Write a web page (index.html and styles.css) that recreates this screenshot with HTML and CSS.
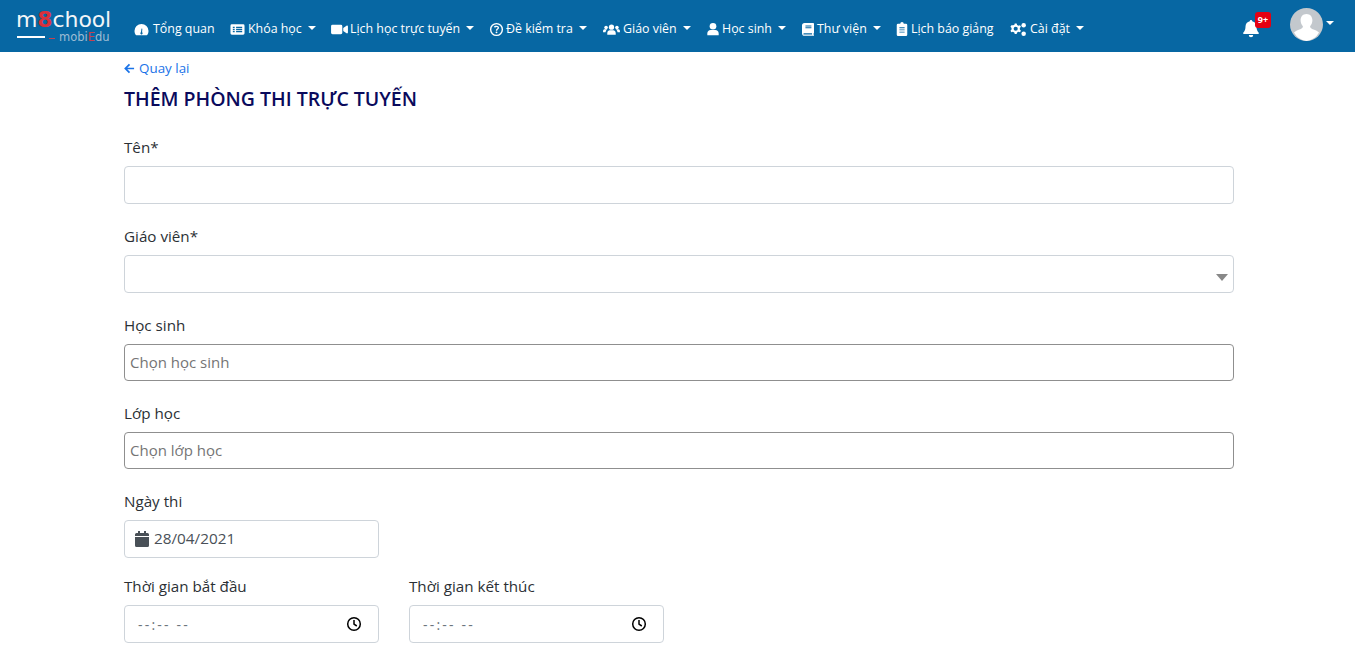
FILE: index.html
```html
<!DOCTYPE html>
<html lang="vi">
<head>
<meta charset="utf-8">
<title>Thêm phòng thi trực tuyến</title>
<link rel="stylesheet" href="styles.css">
</head>
<body>
<header class="navbar">
  <a class="logo" href="#">
    <span class="logo-main">m<span class="logo-red">8</span>chool</span>
    <span class="logo-sub"><span class="logo-line"></span><span class="logo-dash"></span><span class="logo-edu">mobi<span class="logo-edu-red">E</span>du</span></span>
  </a>
  <nav class="menu">
    <a class="item w1" href="#"><svg class="ic" viewBox="0 0 16 16"><path fill-rule="evenodd" d="M8 2a7.500 7.500 0 0 0-7.500 7.500c0 1.500.4 2.800 1.200 4a1 1 0 0 0 .8.500h11a1 1 0 0 0 .8-.5c.8-1.200 1.200-2.500 1.200-4A7.500 7.500 0 0 0 8 2zm.9 5.200L8.600 11a1.200 1.200 0 1 1-1.200 0L8 7z"/></svg>Tổng quan</a>
    <a class="item w2 caret" href="#"><svg class="ic" viewBox="0 0 16 16"><path fill-rule="evenodd" d="M2 2.500h12a1.500 1.500 0 0 1 1.500 1.500v8a1.500 1.500 0 0 1-1.500 1.500H2A1.500 1.500 0 0 1 .5 12V4A1.500 1.500 0 0 1 2 2.500zM3 5v1.500h2V5zm3.500 0v1.500H13V5zM3 7.300v1.400h2V7.300zm3.500 0v1.400H13V7.300zM3 9.500V11h2V9.500zm3.500 0V11H13V9.500z"/></svg>Khóa học</a>
    <a class="item w3 caret" href="#"><svg class="ic ic-wide" viewBox="0 0 18 16"><path d="M1.500 3h9A1.500 1.500 0 0 1 12 4.500v7a1.500 1.500 0 0 1-1.500 1.500h-9A1.500 1.500 0 0 1 0 11.500v-7A1.500 1.500 0 0 1 1.500 3zM13 6.500l3.500-2.500c.6-.4 1.500 0 1.500.8v6.400c0 .8-.9 1.200-1.500.8L13 9.500z"/></svg>Lịch học trực tuyến</a>
    <a class="item w4 caret" href="#"><svg class="ic" viewBox="0 0 16 16"><path fill-rule="evenodd" d="M8 1a7 7 0 1 1 0 14A7 7 0 0 1 8 1zm0 1.500a5.500 5.500 0 1 0 0 11 5.500 5.500 0 0 0 0-11zM8 4c1.500 0 2.700.9 2.700 2.200 0 1.800-2 1.800-2 3H7.300c0-2 2-2 2-3 0-.6-.6-.9-1.300-.9-.7 0-1.200.3-1.600.9l-1-.8C5.100 4.500 6.300 4 8 4zm0 6a1 1 0 1 1 0 2 1 1 0 0 1 0-2z"/></svg>Đề kiểm tra</a>
    <a class="item w5 caret" href="#"><svg class="ic ic-wide" viewBox="0 0 18 16"><circle cx="9" cy="5.500" r="2.800"/><circle cx="3.200" cy="5.800" r="1.900"/><circle cx="14.800" cy="5.800" r="1.900"/><path d="M4.500 13.500v-1.800C4.500 9.800 6 8.800 7 8.800h4c1 0 2.500 1 2.500 2.900v1.800zM0 11V9.500c0-1 .8-1.700 1.800-1.700h2.600c-1 .7-1.600 1.800-1.800 3.200zM18 11V9.500c0-1-.8-1.700-1.800-1.700h-2.600c1 .7 1.600 1.800 1.800 3.200z"/></svg>Giáo viên</a>
    <a class="item w6 caret" href="#"><svg class="ic ic-user" viewBox="0 0 16 16"><circle cx="8" cy="4.800" r="3.800"/><path d="M1.500 15v-1.800c0-2.300 1.700-4 3.800-4h5.400c2.100 0 3.800 1.700 3.800 4V15z"/></svg>Học sinh</a>
    <a class="item w7 caret" href="#"><svg class="ic ic-narrow" viewBox="0 0 14 16"><path fill-rule="evenodd" d="M3 1h10a1 1 0 0 1 1 1v10.500a1 1 0 0 1-.6.9v1.100h.2a.7.7 0 0 1 0 1.500H3a3 3 0 0 1-3-3V4a3 3 0 0 1 3-3zm-.6 12c-.4 0-.9.300-.9.800s.5.700.9.700h9.300V13zM4 4v1h7V4zm0 2v1h7V6z"/></svg>Thư viện</a>
    <a class="item w8" href="#"><svg class="ic ic-narrow" viewBox="0 0 12 16"><path fill-rule="evenodd" d="M4 2a2 2 0 0 1 4 0h2.500A1.500 1.500 0 0 1 12 3.500v11a1.500 1.500 0 0 1-1.500 1.500h-9A1.500 1.500 0 0 1 0 14.500v-11A1.500 1.500 0 0 1 1.500 2zM3 6v1h6V6zm0 2.500v1h6v-1zM3 11v1h6v-1z"/></svg>Lịch báo giảng</a>
    <a class="item caret" href="#"><svg class="ic ic-wide" viewBox="0 0 18 16"><path fill-rule="evenodd" d="M5 3.500l1.500-.4.500-1.600h2l.5 1.600 1.500.8 1.600-.5 1 1.700-1.200 1.200v1.700l1.200 1.200-1 1.700-1.600-.5-1.500.8-.5 1.600H7l-.5-1.600-1.500-.8-1.600.5-1-1.700L3.600 8V6.300L2.400 5.100l1-1.700zM8 5a2.200 2.200 0 1 0 0 4.400A2.200 2.200 0 0 0 8 5z" transform="translate(-2 0)"/><circle cx="14.500" cy="3.500" r="2.400"/><circle cx="14.500" cy="12.500" r="2.400"/></svg>Cài đặt</a>
  </nav>
  <div class="tools">
    <a class="bell" href="#">
      <svg class="bell-ic" viewBox="0 0 16 18"><path d="M8 0a1.200 1.200 0 0 1 1.200 1.300c2.600.5 4.300 2.700 4.300 5.200 0 4.500 2 5.600 2.300 6.300.3.500 0 1.200-.8 1.200H1c-.8 0-1.100-.7-.8-1.200.3-.7 2.300-1.800 2.300-6.300 0-2.500 1.700-4.700 4.300-5.200A1.200 1.200 0 0 1 8 0zM5.800 15h4.400a2.200 2.200 0 0 1-4.400 0z"/></svg>
      <span class="badge">9+</span>
    </a>
    <a class="user" href="#">
      <svg class="avatar" viewBox="0 0 33 33"><circle cx="16.500" cy="16.500" r="16.500" fill="#c3c8cd"/><path d="M16.500 6c3.800 0 5.900 2.900 5.900 6.300 0 2.400-1 4.600-2.300 6 0 1.300.5 2 2 2.600 3 1 5.400 2 6.900 3.600A16.500 16.500 0 0 1 16.500 33 16.500 16.500 0 0 1 4 24.500c1.500-1.600 3.900-2.600 6.900-3.600 1.500-.6 2-1.300 2-2.600-1.300-1.400-2.300-3.600-2.300-6C10.600 8.900 12.700 6 16.500 6z" fill="#fff"/></svg>
      <span class="user-caret"></span>
    </a>
  </div>
</header>
<main class="container">
  <a class="back" href="#"><svg class="back-ic" viewBox="0 0 12 12"><path d="M6 1.500L1.500 6 6 10.500M1.800 6H11" fill="none" stroke="currentColor" stroke-width="1.900"/></svg>Quay lại</a>
  <h1 class="title">THÊM PHÒNG THI TRỰC TUYẾN</h1>
  <form class="form">
    <div class="group g1">
      <label class="label">Tên*</label>
      <div class="control"></div>
    </div>
    <div class="group g1">
      <label class="label">Giáo viên*</label>
      <div class="control select"><span class="select-arrow"></span></div>
    </div>
    <div class="group g2">
      <label class="label">Học sinh</label>
      <div class="control dark"><span class="placeholder">Chọn học sinh</span></div>
    </div>
    <div class="group g2">
      <label class="label">Lớp học</label>
      <div class="control dark"><span class="placeholder">Chọn lớp học</span></div>
    </div>
    <div class="group g3">
      <label class="label">Ngày thi</label>
      <div class="control short date">
        <svg class="cal" viewBox="0 0 14 16"><path d="M3 0h2v2h4V0h2v2h1.500A1.500 1.500 0 0 1 14 3.500V5H0V3.500A1.500 1.500 0 0 1 1.500 2H3zM0 6h14v8.500a1.500 1.500 0 0 1-1.500 1.500h-11A1.500 1.500 0 0 1 0 14.500z"/></svg>
        <span class="value">28/04/2021</span>
      </div>
    </div>
    <div class="times">
      <div class="time-col">
        <label class="label">Thời gian bắt đầu</label>
        <div class="control short time"><span class="time-text">--:-- --</span><svg class="clock" viewBox="0 0 16 16"><circle cx="8" cy="8" r="6.300" fill="none" stroke="#000" stroke-width="1.500"/><path d="M8 4v4.200l2.800 1.800" fill="none" stroke="#000" stroke-width="1.500"/></svg></div>
      </div>
      <div class="time-col">
        <label class="label">Thời gian kết thúc</label>
        <div class="control short time"><span class="time-text">--:-- --</span><svg class="clock" viewBox="0 0 16 16"><circle cx="8" cy="8" r="6.300" fill="none" stroke="#000" stroke-width="1.500"/><path d="M8 4v4.200l2.800 1.800" fill="none" stroke="#000" stroke-width="1.500"/></svg></div>
      </div>
    </div>
  </form>
</main>
</body>
</html>
```
FILE: styles.css
```css
* { box-sizing: border-box; }
html, body { height: 100%; }
body {
  margin: 0;
  overflow: hidden;
  background: #fff;
  color: #212529;
  font-family: "Open Sans", "Noto Sans", "Liberation Sans", sans-serif;
  font-size: 15px;
}
a { text-decoration: none; }

.navbar {
  height: 52px;
  background: #0767a3;
  display: flex;
  align-items: center;
  padding: 6px 21px 0 16px;
}
.logo {
  width: 118px;
  flex: none;
  display: flex;
  flex-direction: column;
  color: #fff;
  margin-top: -6px;
}
.logo-main {
  font-family: "DejaVu Sans", sans-serif;
  font-size: 22px;
  line-height: 20px;
  letter-spacing: -0.1px;
  color: #f2f5f8;
}
.logo-red { color: #d9303c; font-weight: 700; }
.logo-sub {
  display: flex;
  align-items: center;
  height: 12px;
  margin-top: 1px;
}
.logo-line { width: 28px; height: 2px; background: #fff; margin-left: 1px; }
.logo-dash { width: 6px; height: 1px; background: #c8404c; margin-left: 4px; margin-top: 3px; }
.logo-edu {
  margin-left: 4px;
  font-family: "DejaVu Sans", sans-serif;
  font-size: 11.5px;
  line-height: 12px;
  color: #9fbdd4;
}
.logo-edu-red { color: #c8404c; }

.menu {
  display: flex;
  align-items: center;
  flex: 1;
  color: #fff;
}
.item {
  display: flex;
  align-items: center;
  color: #fff;
  font-size: 12.4px;
  font-weight: 500;
  line-height: 20px;
  white-space: nowrap;
}
.w1 { width: 96px; }
.w2 { width: 101px; }
.w3 { width: 158px; }
.w4 { width: 114px; }
.w5 { width: 103px; }
.w6 { width: 96px; }
.w7 { width: 94px; }
.w8 { width: 114px; }
.caret::after {
  content: "";
  margin-left: 6px;
  border-top: 4px solid #fff;
  border-left: 4px solid transparent;
  border-right: 4px solid transparent;
  margin-top: -3px;
}
.ic { width: 15px; height: 15px; margin-right: 3px; fill: #fff; flex: none; }
.ic-wide { width: 17px; height: 15px; margin-right: 3px; }
.ic-narrow { width: 12px; height: 14px; margin-right: 3px; }
.ic-user { width: 14px; height: 14px; margin-right: 2px; }
.w1 .ic { margin-right: 4px; }
.w3 .ic, .w4 .ic { margin-right: 2px; }

.tools { display: flex; align-items: center; gap: 31px; margin-top: -6px; }
.bell { position: relative; display: block; width: 16px; height: 18px; margin-top: 6px; }
.bell-ic { display: block; width: 16px; height: 18px; fill: #fff; }
.badge {
  position: absolute;
  left: 12px;
  top: -8px;
  width: 16px;
  height: 16px;
  border-radius: 3px;
  background: #e60012;
  color: #fff;
  font-size: 9px;
  font-weight: 700;
  line-height: 15px;
  text-align: center;
}
.user { display: flex; align-items: center; margin-top: -4px; }
.avatar { width: 33px; height: 33px; display: block; }
.user-caret {
  margin-left: 3px;
  margin-top: -2px;
  border-top: 4px solid #fff;
  border-left: 4px solid transparent;
  border-right: 4px solid transparent;
}

.container {
  width: 1110px;
  margin-left: 124px;
  padding-top: 6px;
}
.back {
  display: flex;
  align-items: center;
  height: 20px;
  color: #1a73e8;
  font-size: 13.4px;
  font-weight: 500;
  line-height: 20px;
}
.back-ic { width: 11px; height: 11px; margin-right: 4px; }
.title {
  margin: 7px 0 0;
  color: #0a0a5c;
  font-size: 19.5px;
  font-weight: 600;
  line-height: 28px;
}
.form { margin-top: 22px; }
.label {
  display: block;
  height: 24px;
  color: #2b3035;
  font-size: 15.2px;
  line-height: 24px;
  margin-bottom: 7px;
}
.group { margin-bottom: 20px; }
.g2 { margin-bottom: 20px; }
.g3 { margin-bottom: 16px; }
.control {
  height: 38px;
  background: #fff;
  border: 1px solid #ced4da;
  border-radius: 4px;
  display: flex;
  align-items: center;
  position: relative;
}
.dark { height: 37px; border-color: #8f8f8f; padding-left: 5px; padding-bottom: 2px; }
.placeholder { color: #757575; font-size: 15px; }
.select-arrow {
  position: absolute;
  right: 5px;
  top: 18px;
  border-top: 7px solid #888;
  border-left: 6px solid transparent;
  border-right: 6px solid transparent;
}
.short { width: 255px; }
.date { padding-left: 10px; }
.cal { width: 14px; height: 16px; fill: #495057; margin-right: 5px; }
.value { color: #495057; font-size: 15.3px; margin-top: -2px; }
.times { display: flex; gap: 30px; }
.time-col { width: 255px; }
.time { justify-content: space-between; padding: 0 16px 0 13px; }
.time-text { color: #6c757d; font-size: 14px; letter-spacing: 2.2px; }
.clock { width: 16px; height: 16px; }
```
